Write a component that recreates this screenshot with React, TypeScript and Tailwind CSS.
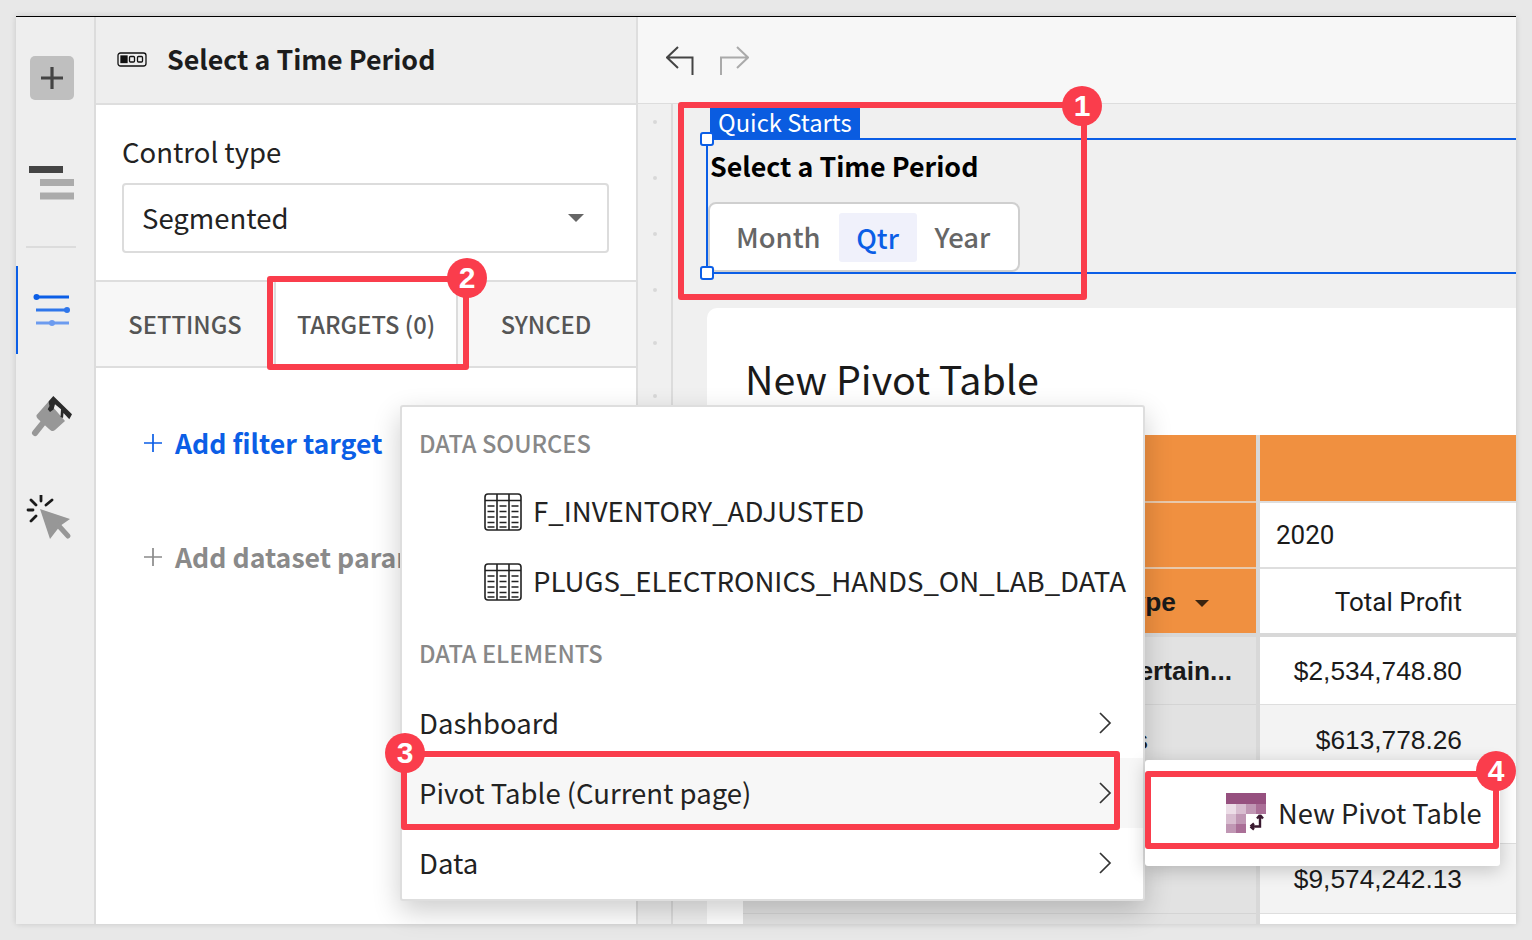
import React from "react";

const RED = "border-[6px] border-[#fa3d4c] rounded-[3px]";

function Badge({ n, className }: { n: string; className: string }) {
  return (
    <div
      className={`absolute w-[40px] h-[40px] rounded-full bg-[#fa3d4c] text-white flex items-center justify-center text-[30px] font-bold leading-none [font-family:'Liberation_Sans',sans-serif] ${className}`}
    >
      {n}
    </div>
  );
}

function TableIcon() {
  return (
    <svg className="shrink-0 -mt-[2px]" width="38" height="38" viewBox="0 0 38 38" fill="none" stroke="#222" strokeWidth="1.6">
      <rect x="1" y="1" width="36" height="36" rx="3" />
      <path d="M1 7.5H37M13 1V37M25 1V37" />
      <path
        strokeWidth="1.5"
        d="M3.500 13H10.500M3.500 18.500H10.500M3.500 24H10.500M3.500 29.500H10.500M3.500 34H10.500M15.500 13H22.500M15.500 18.500H22.500M15.500 24H22.500M15.500 29.500H22.500M15.500 34H22.500M27.500 13H34.500M27.500 18.500H34.500M27.500 24H34.500M27.500 29.500H34.500M27.500 34H34.500"
      />
    </svg>
  );
}

function Chevron() {
  return (
    <svg width="14" height="22" viewBox="0 0 14 22" fill="none" stroke="#333" strokeWidth="1.7">
      <path d="M2 1L12 11L2 21" />
    </svg>
  );
}

function PlusIcon({ color }: { color: string }) {
  return (
    <svg className="shrink-0" width="20" height="20" viewBox="0 0 20 20" fill="none" stroke={color} strokeWidth="1.7">
      <path d="M10 1V19M1 10H19" />
    </svg>
  );
}

function Rail() {
  return (
    <div className="w-[80px] shrink-0 bg-[#eeeeee] border-r-2 border-[#dcdcdc] flex flex-col relative">
      <div className="ml-[14px] mt-[39px] w-[44px] h-[44px] rounded-[5px] bg-[#bfbfbf] flex items-center justify-center">
        <svg width="22" height="22" viewBox="0 0 22 22" fill="none" stroke="#444" strokeWidth="3.200">
          <path d="M11 0V22M0 11H22" />
        </svg>
      </div>
      <svg className="ml-[13px] mt-[66px]" width="46" height="35" viewBox="0 0 46 35">
        <rect x="0" y="0" width="34" height="7" fill="#444" />
        <rect x="11" y="13" width="34" height="7" fill="#ababab" />
        <rect x="11" y="26.500" width="34" height="7" fill="#ababab" />
      </svg>
      <div className="ml-[10px] mt-[45px] w-[50px] h-[2px] bg-[#dcdcdc]" />
      <div className="mt-[18px] h-[88px] border-l-2 border-[#0b5ee6] pl-[15px] pt-[27px]">
        <svg width="40" height="36" viewBox="0 0 40 36" fill="none">
          <path d="M3 4H36" stroke="#0b5ee6" strokeWidth="3" />
          <circle cx="3.500" cy="4" r="3" fill="#0b5ee6" />
          <path d="M3 17H36" stroke="#2f76ea" strokeWidth="3" />
          <circle cx="34" cy="17" r="3" fill="#2f76ea" />
          <path d="M3 30H36" stroke="#6c9bef" strokeWidth="3" />
          <circle cx="19" cy="30" r="3" fill="#6c9bef" />
        </svg>
      </div>
      <svg className="ml-[14px] mt-[41px]" width="44" height="44" viewBox="0 0 44 44" fill="none">
        <path d="M13.300 27.700L5 38" stroke="#979797" strokeWidth="6" strokeLinecap="round" />
        <path d="M7.300 19.300L18.300 6.700L35 26L25 35C23 37 21 36 19 34L8 24C6 22 6 20 7.300 19.300Z" fill="#979797" />
        <path
          d="M23.300 1L42 19.300L39.300 24.300L33.500 18L33 23L30.500 22L31 14.300L25 9.300L23.500 14.500L20 17L17.700 14.300L19.500 11L18.500 6.500Z"
          fill="#2b2b2b"
        />
      </svg>
      <svg className="ml-[10px] mt-[56px]" width="48" height="48" viewBox="0 0 48 48" fill="none">
        <path d="M14 14L44 24L34 31L24 44Z" fill="#979797" />
        <path d="M32 30L42 41" stroke="#979797" strokeWidth="5" strokeLinecap="round" />
        <path
          d="M15 0V6M5 5L10 10M20 10L26 5M2 15H7M5 26L10 21"
          stroke="#1a1a1a"
          strokeWidth="2.800"
          strokeLinecap="round"
        />
      </svg>
    </div>
  );
}

function Panel() {
  return (
    <div className="w-[540px] shrink-0 bg-white flex flex-col relative">
      <div className="h-[88px] bg-[#eeeeee] border-b-2 border-[#dedede] flex items-center pl-[21px]">
        <svg width="30" height="16" viewBox="0 0 30 16" fill="none" stroke="#111" strokeWidth="1.300">
          <rect x="1" y="1" width="28" height="13" rx="2.500" />
          <rect x="4" y="4" width="6" height="6.500" fill="#111" />
          <rect x="12.500" y="4.500" width="5" height="5.500" rx="1" />
          <rect x="20.500" y="4.500" width="5" height="5.500" rx="1" />
        </svg>
        <span className="ml-[20px] -mt-[2px] text-[26.800px] font-semibold leading-[40px] text-[#1c1c1c]">Select a Time Period</span>
      </div>
      <div className="h-[175px] pl-[26px] pr-[27px] pt-[26px]">
        <div className="text-[27.500px] leading-[40px] text-[#222]">Control type</div>
        <div className="mt-[12px] h-[70px] border-2 border-[#dcdcdc] rounded-[4px] flex items-center justify-between pl-[18px] pr-[23px]">
          <span className="text-[27.500px] leading-[40px] text-[#222] -mt-[3px]">Segmented</span>
          <div className="w-0 h-0 border-l-[8px] border-r-[8px] border-t-[8px] border-l-transparent border-r-transparent border-t-[#666]" />
        </div>
      </div>
      <div className="h-[88px] bg-[#f7f7f7] border-y-2 border-[#dedede] flex text-[23.700px] font-medium leading-[34px] text-[#555]">
        <div className="w-[178px] flex items-center justify-center">SETTINGS</div>
        <div className="w-[184px] bg-white border-x-2 border-[#dcdcdc] flex items-center justify-center">TARGETS (0)</div>
        <div className="flex-1 flex items-center justify-center pr-[2px]">SYNCED</div>
      </div>
      <div className="pl-[47px] pt-[55px] text-[26.700px] font-semibold leading-[40px]">
        <div className="flex items-center gap-[12px] text-[#0b5ee6]">
          <PlusIcon color="#0b5ee6" />
          <span>Add filter target</span>
        </div>
        <div className="flex items-center gap-[12px] mt-[74px] text-[#8a8a8a] whitespace-nowrap">
          <PlusIcon color="#8a8a8a" />
          <span>Add dataset parameter</span>
        </div>
      </div>
    </div>
  );
}

function Canvas() {
  return (
    <div className="flex-1 flex min-h-0 bg-[#f0f0f0] border-t border-[#dddddd]">
      <div className="w-[35px] shrink-0 border-r-2 border-[#dcdcdc] flex flex-col items-center pt-[16px] gap-[52px] overflow-hidden">
        {[0, 1, 2, 3].map((i) => (
          <div key={i} className="w-[4px] h-[4px] shrink-0 rounded-full bg-[#d8d8d8]" />
        ))}
        {[0, 1, 2, 3, 4, 5, 6, 7, 8, 9, 10].map((i) => (
          <div key={i} className="w-[4px] h-[4px] shrink-0 rounded-full bg-[#d8d8d8] -mt-[3px]" />
        ))}
      </div>
      <div className="flex-1 min-w-0 flex flex-col pl-[34px] overflow-hidden">
        <div className="relative mt-[34px] h-[136px] -ml-[1px] border-y-2 border-l-2 border-[#0b5ee6] shrink-0">
          <div className="absolute left-[2px] -top-[32px] w-[150px] h-[31px] bg-[#0a5ce0] text-white text-[23.800px] leading-[28px] pl-[8px] whitespace-nowrap">
            Quick Starts
          </div>
          <div className="absolute -left-[8px] -top-[8px] w-[14px] h-[14px] bg-white border-2 border-[#0b5ee6] rounded-[3px]" />
          <div className="absolute -left-[8px] -bottom-[8px] w-[14px] h-[14px] bg-white border-2 border-[#0b5ee6] rounded-[3px]" />
          <div className="pl-[2px] pt-[6px] text-[26.800px] font-semibold leading-[40px] text-black">Select a Time Period</div>
          <div className="mt-[16px] w-[312px] h-[70px] bg-white border-2 border-[#cfcfcf] rounded-[8px] flex items-center pl-[26px] text-[27.400px] font-medium leading-[40px] text-[#666]">
            <span className="-mt-[3px]">Month</span>
            <span className="ml-[18px] w-[78px] h-[49px] bg-[#f0f1fb] rounded-[3px] text-[#0b5ee6] flex items-center justify-center pb-[1px]">Qtr</span>
            <span className="ml-[18px] -mt-[3px]">Year</span>
          </div>
        </div>
        <div className="mt-[34px] flex-1 min-h-0 bg-white rounded-tl-[10px] overflow-hidden">
          <div className="h-[127px] pl-[38px] pt-[45px] text-[39.400px] leading-[50px] text-[#1a1a1a]">New Pivot Table</div>
          <div className="pl-[36px] [font-family:'Liberation_Sans',sans-serif] text-[26.300px] text-[#1a1a1a] bg-white">
            <div className="flex h-[68px]">
              <div className="w-[513px] bg-[#f09040] border-b-2 border-[#e8c9ac]" />
              <div className="w-[4px] bg-[#d8d8d8]" />
              <div className="flex-1 bg-[#f09040] border-b-2 border-[#dedede]" />
            </div>
            <div className="flex h-[66px]">
              <div className="w-[513px] bg-[#f09040] border-b-2 border-[#e8c9ac]" />
              <div className="w-[4px] bg-[#d8d8d8]" />
              <div className="flex-1 bg-white border-b-2 border-[#dedede] flex items-center pl-[16px] [font-family:Roboto,sans-serif] text-[26px]">
                2020
              </div>
            </div>
            <div className="flex h-[64px]">
              <div className="w-[513px] bg-[#f09040] flex items-center justify-end pr-[47px] font-bold pt-[4px]">
                <span>Product Type</span>
                <div className="ml-[19px] w-0 h-0 border-l-[7px] border-r-[7px] border-t-[7px] border-l-transparent border-r-transparent border-t-[#3a2410]" />
              </div>
              <div className="w-[4px] bg-[#d8d8d8]" />
              <div className="flex-1 bg-white flex items-center justify-end pr-[54px] [font-family:Roboto,sans-serif] text-[26px] pt-[2px]">
                Total Profit
              </div>
            </div>
            <div className="h-[4px] bg-[#d8d8d8]" />
            {[
              { l: "Entertainment", r: "$2,534,748.80", bg: "bg-white", h: "h-[68px]", bold: true },
              { l: "Accessories", r: "$613,778.26", bg: "bg-[#f3f3f3]", h: "h-[69px]", bold: false },
              { l: "", r: "$1,204,516.42", bg: "bg-white", h: "h-[70px]", bold: false },
              { l: "", r: "$9,574,242.13", bg: "bg-[#f3f3f3]", h: "h-[70px]", bold: false },
              { l: "", r: "", bg: "bg-white", h: "h-[69px]", bold: false },
            ].map((row, i) => (
              <div key={i} className={`flex ${row.h}`}>
                <div
                  className={`w-[513px] bg-[#e2e2e2] border-b border-[#d4d4d4] flex items-center justify-end pt-[3px] ${
                    row.bold ? "font-bold pr-[24px]" : "pr-[108px]"
                  }`}
                >
                  {row.bold ? "Entertain..." : row.l}
                </div>
                <div className="w-[4px] bg-[#d8d8d8]" />
                <div className={`flex-1 ${row.bg} border-b border-[#dedede] flex items-center justify-end pr-[54px] pt-[3px]`}>
                  {row.r}
                </div>
              </div>
            ))}
          </div>
        </div>
      </div>
    </div>
  );
}

function MenuRow({ label, hl }: { label: string; hl?: boolean }) {
  return (
    <div className={`h-[70px] flex items-center justify-between pl-[17px] pr-[31px] text-[27.500px] leading-[40px] text-[#222] ${hl ? "bg-[#f7f7f7]" : ""}`}>
      <span className="-mt-[3px]">{label}</span>
      <Chevron />
    </div>
  );
}

function Menu() {
  const head = "h-[70px] flex items-center pl-[17px] text-[23.700px] font-medium leading-[34px] text-[#888]";
  const source = "h-[70px] flex items-center pl-[82px] gap-[11px] text-[27.600px] leading-[40px] text-[#222] whitespace-nowrap";
  return (
    <div className="absolute left-[400px] top-[405px] w-[745px] h-[496px] bg-white border-2 border-[#dedede] rounded-[3px] shadow-[0_10px_28px_rgba(0,0,0,0.2)] pt-[1px]">
      <div className={head}>DATA SOURCES</div>
      <div className={source}>
        <TableIcon />
        <span className="-mt-[7px]">F_INVENTORY_ADJUSTED</span>
      </div>
      <div className={source}>
        <TableIcon />
        <span className="-mt-[7px]">PLUGS_ELECTRONICS_HANDS_ON_LAB_DATA</span>
      </div>
      <div className={head}>DATA ELEMENTS</div>
      <MenuRow label="Dashboard" />
      <MenuRow label="Pivot Table (Current page)" hl />
      <MenuRow label="Data" />
    </div>
  );
}

function Submenu() {
  return (
    <div className="absolute left-[1145px] top-[760px] w-[355px] h-[106px] bg-white rounded-[3px] shadow-[0_4px_18px_rgba(0,0,0,0.2)] flex items-center pl-[81px] gap-[12px]">
      <svg width="40" height="40" viewBox="0 0 40 40">
        <rect x="0" y="0" width="40" height="11" fill="#96507f" />
        <rect x="0" y="11" width="10" height="10" fill="#ecdde7" />
        <rect x="10" y="11" width="10" height="10" fill="#d8bdd0" />
        <rect x="20" y="11" width="10" height="10" fill="#c097b4" />
        <rect x="30" y="11" width="10" height="10" fill="#aa6f97" />
        <rect x="0" y="21" width="10" height="10" fill="#d8bdd0" />
        <rect x="10" y="21" width="10" height="10" fill="#c097b4" />
        <rect x="0" y="31" width="10" height="9" fill="#c097b4" />
        <rect x="10" y="31" width="10" height="9" fill="#aa6f97" />
        <path d="M34 22V33.500H24.500M34 22L31 25.500M34 22L37 25.500M24.500 33.500L28 30.500M24.500 33.500L28 36.500" stroke="#3a1a30" strokeWidth="2.400" fill="none" />
      </svg>
      <span className="text-[27.300px] leading-[40px] text-[#222] whitespace-nowrap -mt-[2px]">New Pivot Table</span>
    </div>
  );
}

export default function App() {
  return (
    <div className="relative w-[1532px] h-[940px] overflow-hidden bg-[#e8e8e8] px-[16px] pt-[16px] pb-[16px] [font-family:'Noto_Sans_CJK_SC','Noto_Sans',sans-serif]">
      <div className="h-[908px] flex border-t border-black shadow-[0_0_6px_rgba(0,0,0,0.15)] overflow-hidden">
        <Rail />
        <Panel />
        <div className="flex-1 min-w-0 flex flex-col border-l-2 border-[#dedede]">
          <div className="h-[86px] shrink-0 bg-[#f7f7f7] flex items-center pl-[28px] pt-[2px] gap-[23px]">
            <svg width="30" height="30" viewBox="0 0 30 30" fill="none" stroke="#444" strokeWidth="2">
              <path d="M12 1L1 11.500L12 22M1 11.500H26.500V29" />
            </svg>
            <svg width="30" height="30" viewBox="0 0 30 30" fill="none" stroke="#aaaaaa" strokeWidth="2">
              <path d="M18 1L29 11.500L18 22M29 11.500H2V29" />
            </svg>
          </div>
          <Canvas />
        </div>
      </div>

      <Menu />
      <Submenu />

      <div className={`absolute left-[678px] top-[102px] w-[409px] h-[198px] ${RED}`} />
      <div className={`absolute left-[267px] top-[276px] w-[202px] h-[94px] ${RED}`} />
      <div className={`absolute left-[401px] top-[751px] w-[719px] h-[79px] ${RED}`} />
      <div className={`absolute left-[1145px] top-[771px] w-[354px] h-[78px] ${RED}`} />

      <Badge n="1" className="left-[1062px] top-[86px]" />
      <Badge n="2" className="left-[447px] top-[258px]" />
      <Badge n="3" className="left-[385px] top-[733px]" />
      <Badge n="4" className="left-[1476px] top-[751px]" />
    </div>
  );
}
